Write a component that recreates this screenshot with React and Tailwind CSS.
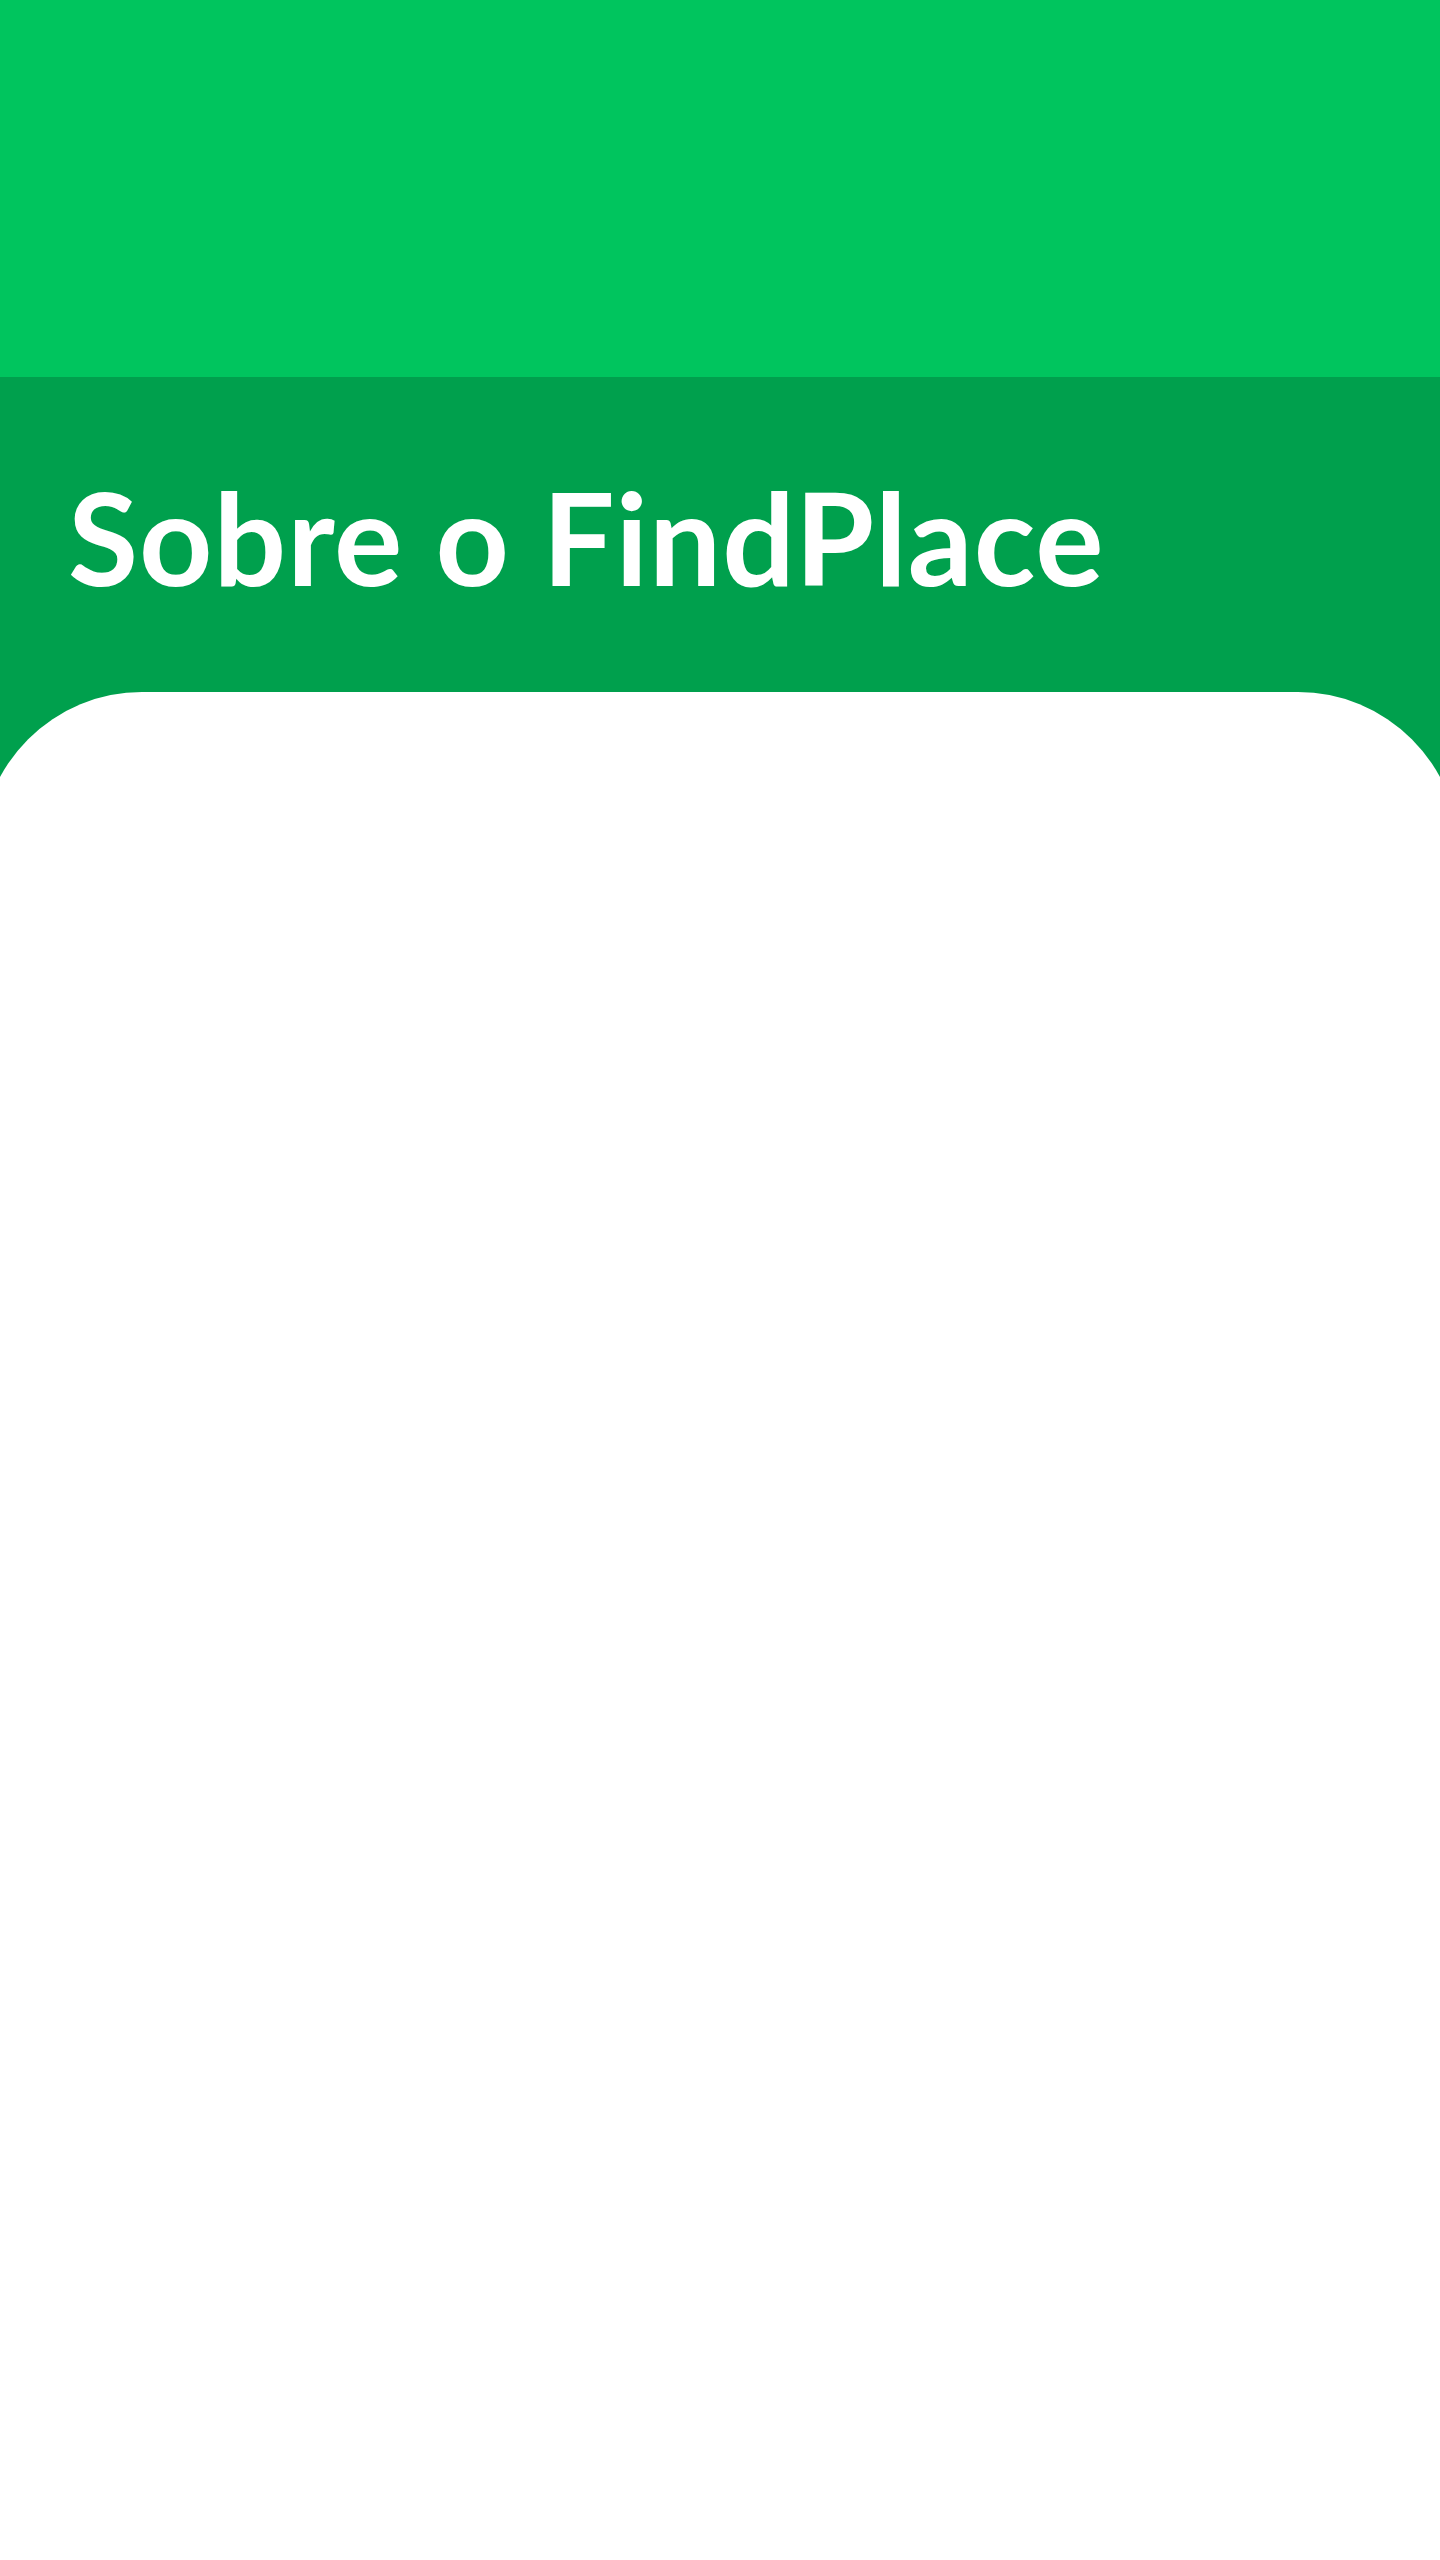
export default function App() {
  return (
    <div className="min-h-[2560px] w-full overflow-x-hidden bg-white" style={{ fontFamily: 'Lato, "Open Sans", sans-serif' }}>
      {/* top header band */}
      <div className="h-[377px] bg-[#00c55e]" />

      {/* about section */}
      <section className="bg-[#00a04d] pt-24">
        <h1 className="pl-[68px] text-9xl font-bold leading-none tracking-[1px] text-white">Sobre o FindPlace</h1>

        {/* white content sheet */}
        <div className="-mx-[19px] mt-[91px] min-h-[1868px] rounded-t-[161px] bg-white" />
      </section>
    </div>
  );
}
